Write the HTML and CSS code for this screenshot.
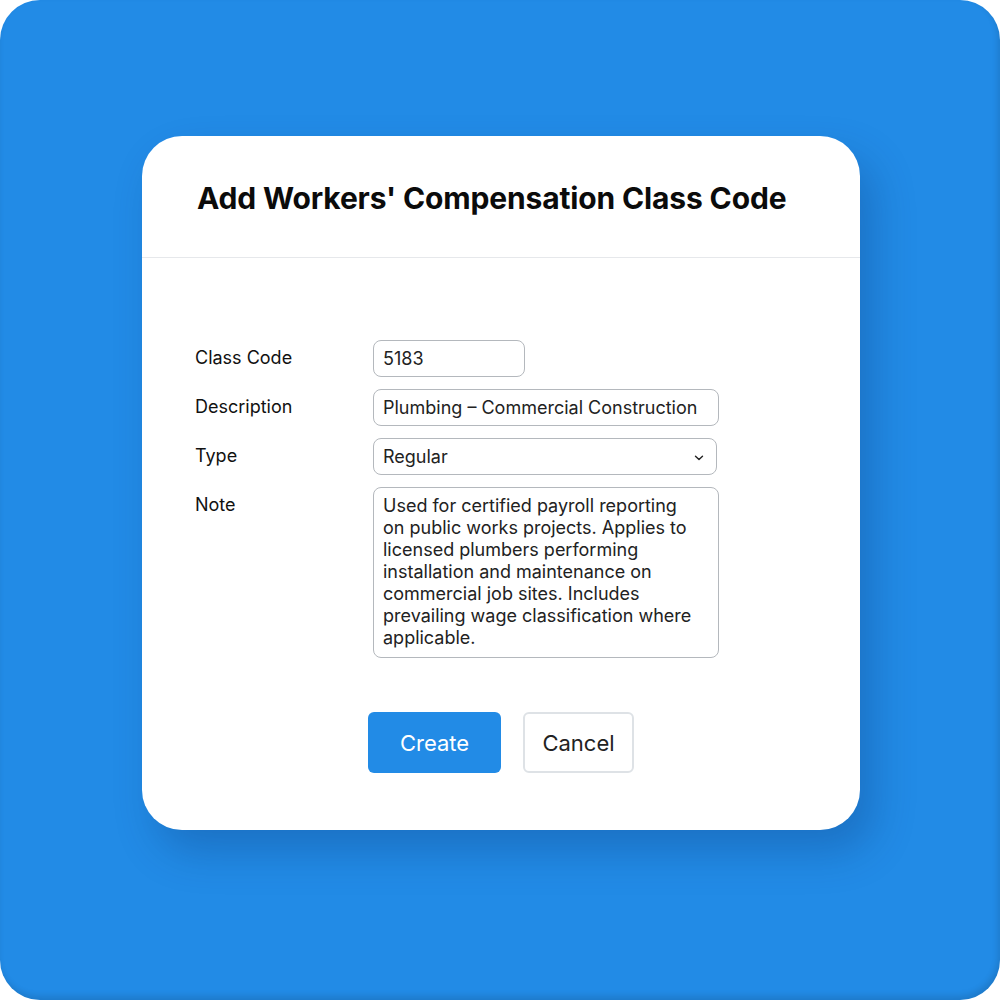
FILE: index.html
```html
<!DOCTYPE html>
<html>
<head>
<meta charset="utf-8">
<link rel="stylesheet" href="styles.css">
</head>
<body>
<div class="frame">
  <div class="card">
    <div class="card-header">
      <h1 class="title">Add Workers' Compensation Class Code</h1>
    </div>
    <div class="card-body">
      <div class="form">
        <label class="label">Class Code</label>
        <div class="field field-code">5183</div>
        <label class="label">Description</label>
        <div class="field field-desc">Plumbing – Commercial Construction</div>
        <label class="label">Type</label>
        <div class="field field-select"><span>Regular</span>
          <svg class="chev" width="10" height="6" viewBox="0 0 10 6"><path d="M1.5 1.2 L5 4.6 L8.5 1.2" fill="none" stroke="#222" stroke-width="1.4" stroke-linecap="round" stroke-linejoin="round"/></svg>
        </div>
        <label class="label">Note</label>
        <div class="field field-note">Used for certified payroll reporting on public works projects. Applies to licensed plumbers performing installation and maintenance on commercial job sites. Includes prevailing wage classification where applicable.</div>
      </div>
      <div class="actions">
        <button class="btn btn-primary">Create</button>
        <button class="btn btn-default">Cancel</button>
      </div>
    </div>
  </div>
</div>
</body>
</html>
```
FILE: styles.css
```css
* { box-sizing: border-box; }
html, body { margin: 0; padding: 0; background: #ffffff; }
body { font-family: Inter, "Noto Sans", sans-serif; color: #111; }
.frame {
  width: 1000px;
  height: 1000px;
  background: #228be6;
  border-radius: 40px;
  box-shadow: inset -2px -4px 6px rgba(0, 0, 0, 0.12);
  padding: 136px 140px 0 142px;
}
.card {
  width: 718px;
  height: 694px;
  background: #fff;
  border-radius: 40px;
  box-shadow: 14px 22px 40px rgba(10, 50, 110, 0.28);
  display: flex;
  flex-direction: column;
}
.card-header {
  height: 122px;
  border-bottom: 1px solid #e6e8eb;
  padding: 2px 55px 0;
  display: flex;
  align-items: center;
}
.title {
  margin: 0;
  font-size: 30px;
  font-weight: 700;
  color: #0b0b0b;
  letter-spacing: -0.15px;
}
.card-body {
  padding: 82px 0 0 53px;
}
.form {
  display: grid;
  grid-template-columns: 178px auto;
  row-gap: 12px;
  justify-items: start;
}
.label {
  font-size: 18px;
  color: #111;
  padding-top: 7px;
  line-height: 22px;
}
.field {
  border: 1px solid #b4b8bd;
  border-radius: 8px;
  font-size: 18px;
  color: #222;
  padding: 0 10px 0 9px;
  height: 37px;
  display: flex;
  align-items: center;
  background: #fff;
}
.field-code { width: 152px; }
.field-desc { width: 346px; }
.field-select { width: 344px; justify-content: space-between; padding-right: 12px; }
.field-note {
  width: 346px;
  height: 171px;
  display: block;
  padding: 7px 24px 7px 9px;
  line-height: 22px;
  font-size: 18px;
}
.chev { margin-top: 2px; }
.actions {
  display: flex;
  gap: 22px;
  margin-top: 54px;
  padding-left: 173px;
}
.btn {
  font-family: Inter, "Noto Sans", sans-serif;
  font-size: 22px;
  height: 61px;
  border-radius: 6px;
  cursor: pointer;
}
.btn-primary {
  width: 133px;
  background: #228be6;
  border: none;
  color: #fff;
}
.btn-default {
  width: 111px;
  background: #fff;
  border: 2px solid #dee2e6;
  color: #222;
}
```
